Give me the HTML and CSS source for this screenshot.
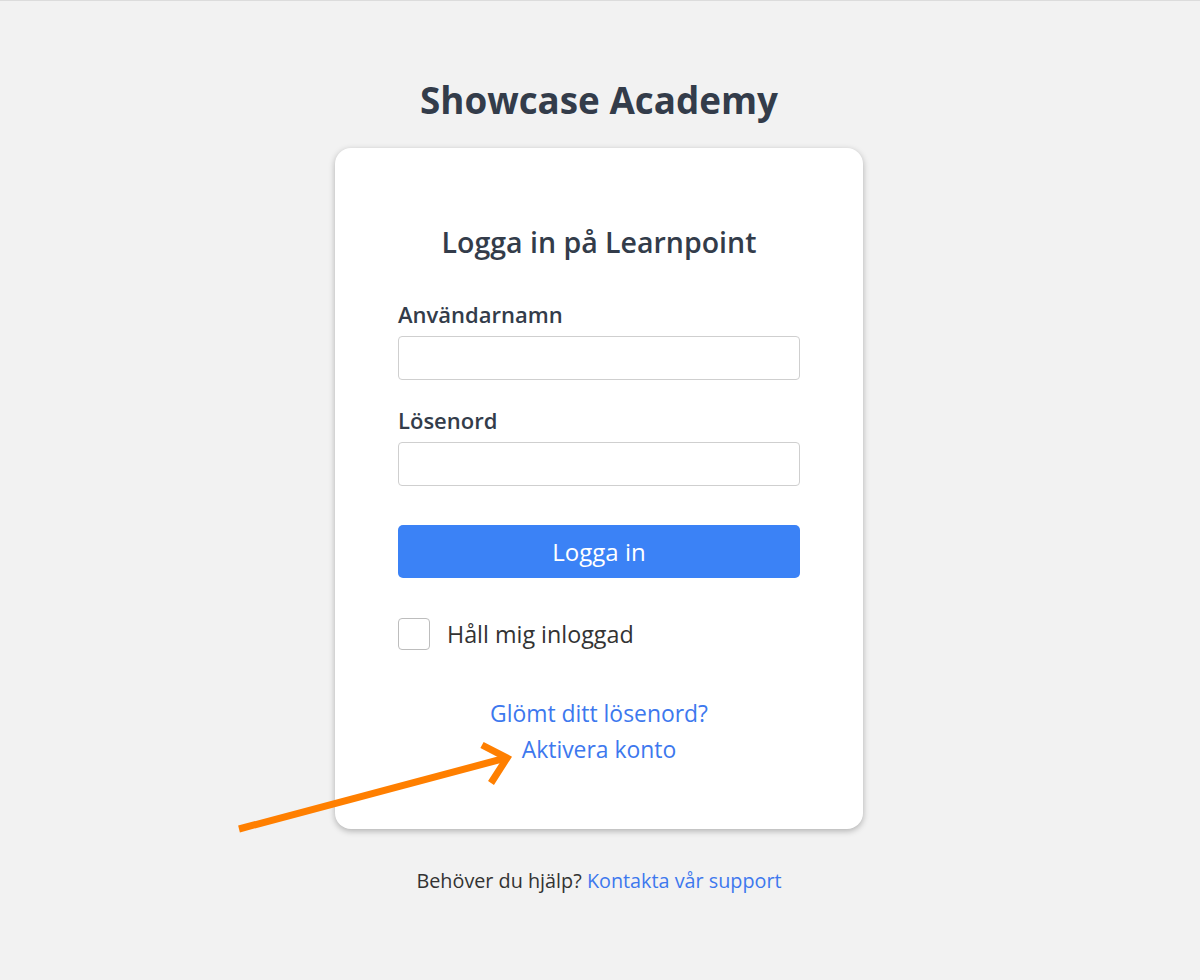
FILE: index.html
```html
<!DOCTYPE html>
<html lang="sv">
<head>
<meta charset="utf-8">
<title>Showcase Academy – Logga in</title>
<link rel="stylesheet" href="styles.css">
</head>
<body>
<div class="page">
  <h1 class="brand">Showcase Academy</h1>
  <main class="card">
    <h2 class="card-title">Logga in på Learnpoint</h2>
    <form class="form">
      <label class="label" for="user">Användarnamn</label>
      <input class="input" id="user" type="text">
      <label class="label label-second" for="pass">Lösenord</label>
      <input class="input" id="pass" type="password">
      <button class="btn" type="button">Logga in</button>
      <div class="remember">
        <span class="checkbox"></span>
        <span class="remember-text">Håll mig inloggad</span>
      </div>
    </form>
    <div class="links">
      <a class="link" href="#">Glömt ditt lösenord?</a>
      <a class="link" href="#">Aktivera konto</a>
    </div>
  </main>
  <p class="footer">Behöver du hjälp? <a class="link-inline" href="#">Kontakta vår support</a></p>
</div>
<svg class="annotation" width="1200" height="980" viewBox="0 0 1200 980">
  <line x1="239" y1="829" x2="506" y2="758" stroke="#ff7f00" stroke-width="7"/>
  <polyline points="482,745 507,758 491,783" fill="none" stroke="#ff7f00" stroke-width="7" stroke-linejoin="miter"/>
</svg>
</body>
</html>
```
FILE: styles.css
```css
html, body {
  margin: 0;
  padding: 0;
}
body {
  background: #f2f2f2;
  border-top: 1px solid #dcdcdc;
  font-family: "Open Sans", "Noto Sans", sans-serif;
  color: #333;
  min-height: 979px;
  position: relative;
}
.page {
  display: flex;
  flex-direction: column;
  align-items: center;
  padding-right: 2px;
}
.brand {
  margin: 75px 0 0;
  font-size: 36.8px;
  line-height: 48px;
  font-weight: 700;
  color: #333c4a;
}
.card {
  margin-top: 24px;
  width: 528px;
  box-sizing: border-box;
  background: #fff;
  border-radius: 16px;
  box-shadow: 0 2px 6px rgba(0, 0, 0, 0.28);
  padding: 76px 63px 61px;
}
.card-title {
  margin: 0;
  text-align: center;
  font-size: 28.5px;
  line-height: 36px;
  font-weight: 600;
  color: #333c4a;
}
.form {
  display: flex;
  flex-direction: column;
  margin-top: 40px;
}
.label {
  font-size: 22px;
  line-height: 28px;
  font-weight: 600;
  color: #333c4a;
  margin-bottom: 8px;
}
.label-second {
  margin-top: 26px;
}
.input {
  height: 44px;
  box-sizing: border-box;
  border: 1px solid #cfcfcf;
  border-radius: 4px;
  background: #fff;
  margin: 0;
}
.btn {
  margin-top: 39px;
  height: 53px;
  border: none;
  border-radius: 5px;
  background: #3b82f6;
  color: #fff;
  font-family: inherit;
  font-size: 24px;
}
.remember {
  margin-top: 40px;
  display: flex;
  align-items: center;
  gap: 17px;
}
.checkbox {
  width: 32px;
  height: 32px;
  box-sizing: border-box;
  border: 1px solid #bdbdbd;
  border-radius: 4px;
}
.remember-text {
  font-size: 23.3px;
  color: #333;
}
.links {
  margin-top: 46px;
  display: flex;
  flex-direction: column;
  align-items: center;
}
.link {
  font-size: 22.9px;
  line-height: 36px;
  color: #3d78ee;
  text-decoration: none;
}
.footer {
  margin: 38px 0 0;
  font-size: 19.8px;
  line-height: 28px;
  color: #333;
}
.link-inline {
  color: #3d78ee;
  text-decoration: none;
}
.annotation {
  position: absolute;
  left: 0;
  top: -1px;
  pointer-events: none;
}
```
